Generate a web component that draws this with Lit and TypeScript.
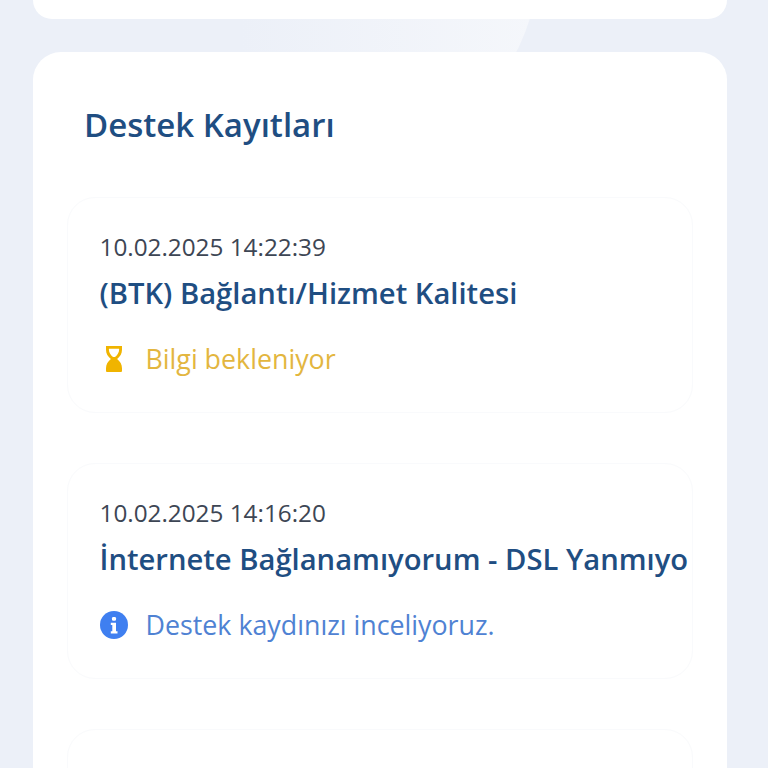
import { LitElement, html, css, svg } from "lit";
import { customElement } from "lit/decorators.js";

const hourglass = svg`<svg class="icon" width="28" height="28" viewBox="0 0 28 28"><path fill="#f0b400" d="M6 1h16v3.800c0 3.800-1.900 6.800-4.900 9.200 3 2.400 4.900 5.400 4.900 9.200v2.800a1 1 0 0 1-1 1H7a1 1 0 0 1-1-1v-2.800c0-3.800 1.900-6.800 4.900-9.200C7.900 11.600 6 8.600 6 4.800z"/><path fill="#fff" d="M8.900 3.700h10.200v1c0 2.700-1.600 5.200-4.100 7.300h-2C10.500 9.900 8.900 7.400 8.900 4.700z"/></svg>`;
const info = svg`<svg class="icon" width="28" height="28" viewBox="0 0 28 28"><circle cx="14" cy="14" r="14" fill="#3f7ff0"/><rect x="12" y="6" width="4" height="3.800" rx="1.200" fill="#fff"/><path fill="#fff" d="M10.800 11.800h5.200v8.400h1.500v2.300h-6.700v-2.300h1.500v-6.100h-1.500z"/></svg>`;

const items = [
  { date: "10.02.2025 14:22:39", title: "(BTK) Bağlantı/Hizmet Kalitesi", status: "Bilgi bekleniyor", cls: "wait", icon: hourglass },
  { date: "10.02.2025 14:16:20", title: "İnternete Bağlanamıyorum - DSL Yanmıyor", status: "Destek kaydınızı inceliyoruz.", cls: "info", icon: info },
];

@customElement("app-root")
export class AppRoot extends LitElement {
  static styles = css`
    :host {
      display: block;
      position: relative;
      height: 768px;
      overflow: hidden;
      background: #ecf0f8;
      font-family: "Open Sans", "Noto Sans", sans-serif;
    }
    .decor {
      position: absolute;
      left: 240px;
      top: 0;
      width: 300px;
      height: 60px;
    }
    .page {
      position: relative;
      display: flex;
      flex-direction: column;
      gap: 33px;
      padding: 0 41px 0 33px;
    }
    .top {
      height: 19px;
      background: #fff;
      border-radius: 0 0 28px 28px;
    }
    .card {
      background: #fff;
      border-radius: 28px;
      padding: 50px 34px 40px 34px;
      display: flex;
      flex-direction: column;
    }
    h2 {
      margin: 0 0 49px 17px;
      font-size: 33px;
      line-height: 46px;
      font-weight: 600;
      color: #1f4e82;
    }
    .list {
      display: flex;
      flex-direction: column;
      gap: 50px;
    }
    .item {
      box-sizing: border-box;
      height: 216px;
      border: 1.500px solid #f9fafc;
      border-radius: 28px;
      padding: 32px 0 0 31.500px;
      overflow: hidden;
    }
    .date {
      font-size: 24.300px;
      line-height: 34px;
      color: #3d4654;
    }
    .title {
      margin-top: 10px;
      font-size: 29.200px;
      line-height: 38px;
      font-weight: 600;
      color: #1f4e82;
      white-space: nowrap;
      overflow: hidden;
      margin-right: 3px;
    }
    .status {
      margin-top: 30px;
      display: flex;
      align-items: center;
      gap: 18px;
      font-size: 26.800px;
      line-height: 34px;
    }
    .icon { flex: none; }
    .wait { color: #e3b63f; }
    .info { color: #4f82d3; }
  `;

  render() {
    return html`
      <svg class="decor" viewBox="0 0 300 60">
        <defs>
          <linearGradient id="g" x1="0" x2="1" y1="0" y2="0">
            <stop offset="0" stop-color="#ecf0f8" />
            <stop offset="1" stop-color="#f5f7fb" />
          </linearGradient>
        </defs>
        <path d="M0 0H295Q287 34 272 60H0z" fill="url(#g)" />
      </svg>
      <div class="page">
        <div class="top"></div>
        <section class="card">
          <h2>Destek Kayıtları</h2>
          <div class="list">
            ${items.map(
              (it) => html`
                <article class="item">
                  <div class="date">${it.date}</div>
                  <div class="title">${it.title}</div>
                  <div class="status ${it.cls}">${it.icon}<span>${it.status}</span></div>
                </article>
              `
            )}
            <article class="item"></article>
          </div>
        </section>
      </div>
    `;
  }
}
